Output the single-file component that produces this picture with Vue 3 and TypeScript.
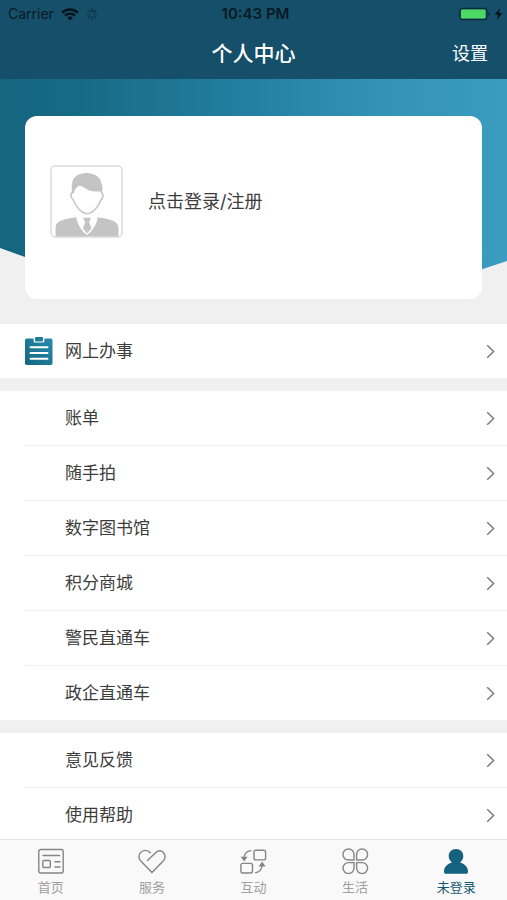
<script setup lang="ts">
import { ref } from 'vue'

interface MenuItem {
  label: string
  icon?: 'clipboard'
}

interface Tab {
  id: string
  label: string
}

const groups: MenuItem[][] = [
  [{ label: '网上办事', icon: 'clipboard' }],
  [
    { label: '账单' },
    { label: '随手拍' },
    { label: '数字图书馆' },
    { label: '积分商城' },
    { label: '警民直通车' },
    { label: '政企直通车' },
  ],
  [{ label: '意见反馈' }, { label: '使用帮助' }],
]

const tabs: Tab[] = [
  { id: 'home', label: '首页' },
  { id: 'service', label: '服务' },
  { id: 'interact', label: '互动' },
  { id: 'life', label: '生活' },
  { id: 'me', label: '未登录' },
]

const activeTab = ref('me')

const spokes = [0, 45, 90, 135, 180, 225, 270, 315]
</script>

<template>
  <div class="app">
    <header class="top">
      <div class="status">
        <div class="status-left">
          <span>Carrier</span>
          <svg class="wifi" viewBox="0 0 18 13" aria-hidden="true">
            <path d="M1.2 4.6a11.2 11.2 0 0 1 15.6 0" />
            <path d="M4 7.6a7.2 7.2 0 0 1 10 0" />
            <path class="dot" d="M9 12.6 6.2 9.8a4 4 0 0 1 5.6 0z" />
          </svg>
          <svg class="spinner" viewBox="0 0 12 12" aria-hidden="true">
            <line
              v-for="(angle, i) in spokes"
              :key="angle"
              x1="6"
              y1="0.8"
              x2="6"
              y2="3.4"
              :transform="`rotate(${angle} 6 6)`"
              :opacity="0.75 - i * 0.06"
            />
          </svg>
        </div>
        <span class="clock">10:43 PM</span>
        <div class="status-right">
          <svg class="battery" viewBox="0 0 44 14" aria-hidden="true">
            <rect class="case" x="0.8" y="1.3" width="27" height="11.4" rx="2.6" />
            <rect class="charge" x="2" y="2.5" width="24.6" height="9" rx="1" />
            <path class="cap" d="M29.4 5.4q1.4.4 1.4 1.6t-1.4 1.6z" />
            <path class="bolt" d="M41 1 35.800 7.800h3.200l-1 5.200 5.200-7h-3.400z" />
          </svg>
        </div>
      </div>
      <div class="nav">
        <h1>个人中心</h1>
        <button type="button" class="settings">设置</button>
      </div>
    </header>

    <main class="content">
      <section class="hero">
        <button type="button" class="card">
          <svg class="avatar" viewBox="0 0 72 72" aria-hidden="true">
            <rect class="frame" x="1" y="1" width="70" height="70" rx="4" />
            <path
              class="fill"
              d="M5.500 70.500V62c0-6 5-8.500 20.500-10.500C26.500 58 31 65 36.500 69 42 65 46.500 58 47 51.500 62 53.500 67.500 56 67.500 62v8.500z"
            />
            <path class="fill" d="M32.500 52h8l-2 4.500 2.500 6-4.500 5-4-5 2.200-6z" />
            <path
              class="face"
              d="M22.200 27c-2.700 1.300-1.600 5.500.8 7.500C25.500 41 31 48 36.500 48S48 41 50.200 34.500c2.400-2 3-6.200.6-7.500V20H22.200z"
            />
            <path
              class="fill"
              d="M21.800 28V18.500C22 11.500 29 8 36 8c9 0 15 5 15 12.500V28l-1.500-2c-6 .8-14-.8-19.500-6.500-3 2-6 4-6.500 8.500z"
            />
          </svg>
          <span>点击登录/注册</span>
        </button>
      </section>

      <nav class="menu" aria-label="个人中心">
        <ul v-for="(group, g) in groups" :key="g" class="group">
          <li v-for="item in group" :key="item.label">
            <a href="#" class="row" @click.prevent>
              <span class="row-icon">
                <svg v-if="item.icon" viewBox="0 0 28 28" aria-hidden="true">
                  <defs>
                    <linearGradient id="clip-fill" x1="0" y1="1" x2="1" y2="0">
                      <stop offset="0" stop-color="#146780" />
                      <stop offset="1" stop-color="#248bad" />
                    </linearGradient>
                  </defs>
                  <rect x="0" y="1.500" width="27.500" height="26.500" rx="1.800" fill="url(#clip-fill)" />
                  <rect x="8.600" y="-1" width="10.800" height="6.600" rx="1.500" fill="#ffffff" />
                  <rect x="10" y="0" width="8" height="4.400" rx="1" fill="#1d7d9b" />
                  <path d="M5.500 10.300h17M5.500 16h17M5.500 21.700h17" stroke="#ffffff" stroke-width="2" stroke-linecap="round" />
                </svg>
              </span>
              <span class="row-label">
                {{ item.label }}
                <svg class="chevron" viewBox="0 0 9 15" aria-hidden="true">
                  <path d="M1.200 1.200 7.600 7.500l-6.400 6.300" />
                </svg>
              </span>
            </a>
          </li>
        </ul>
      </nav>
    </main>

    <nav class="tabs" aria-label="主导航">
      <button
        v-for="tab in tabs"
        :key="tab.id"
        type="button"
        class="tab"
        :class="{ active: tab.id === activeTab }"
        @click="activeTab = tab.id"
      >
        <svg viewBox="0 0 28 28" aria-hidden="true">
          <template v-if="tab.id === 'home'">
            <rect x="1.800" y="2.500" width="24.400" height="23.500" rx="2" />
            <path d="M6 8.500h16.500M18 14.800h5M18 20h5" />
            <rect x="5.800" y="13.500" width="7.500" height="7" rx="1" />
          </template>
          <template v-else-if="tab.id === 'service'">
            <path
              d="M9.500 13.500 17 6.200C20 2.800 24 3.200 26 6.300c1.500 2.600 1.100 5.600-.8 7.700L14 25.500 2.800 14C.8 11.700.6 8.200 2.500 5.700 5 2.500 9.500 2.600 12.200 5.800"
            />
          </template>
          <template v-else-if="tab.id === 'interact'">
            <rect x="15" y="3.300" width="11.600" height="9.600" rx="2" />
            <rect x="1.900" y="16.400" width="11.600" height="9.600" rx="2" />
            <path d="M11.800 3.600C7.300 4 5.300 6.500 5.100 11.500M16.800 25.800c4-.8 6-3.200 6.300-8" />
            <path class="arrow" d="M1.600 9.800h7L5.200 14.600zM19.600 19.400h7l-3.400-4.800z" />
          </template>
          <template v-else-if="tab.id === 'life'">
            <path
              d="M13 13H7.500A5.500 5.500 0 1 1 13 7.500zM15.600 13h5.500a5.500 5.500 0 1 0-5.500-5.500zM13 15.600H7.500A5.500 5.500 0 1 0 13 21.100zM15.600 15.600h5.500a5.500 5.500 0 1 1-5.500 5.500z"
            />
          </template>
          <path
            v-else
            class="person"
            d="M14 2c4.300 0 7.300 3.100 7.300 7 0 2.900-1.300 5.200-3.300 6.500 4.500 1.200 8 4.500 8 9 0 1.500-.7 2.300-2 2.300H4c-1.300 0-2-.8-2-2.300 0-4.500 3.500-7.800 8-9C8 14.200 6.700 11.900 6.700 9c0-3.900 3-7 7.300-7z"
          />
        </svg>
        <span>{{ tab.label }}</span>
      </button>
    </nav>
  </div>
</template>

<style>
body {
  margin: 0;
  background: #f0f0f0;
}
</style>

<style scoped>
.app {
  display: flex;
  flex-direction: column;
  height: 100vh;
  overflow: hidden;
  background: #f0f0f0;
  color: #3c3c3c;
  font-family: Inter, 'Noto Sans CJK SC', sans-serif;
}

button {
  margin: 0;
  padding: 0;
  border: 0;
  background: none;
  color: inherit;
  font: inherit;
  cursor: pointer;
}

.top {
  flex: none;
  background: #154f69;
}

.status {
  display: grid;
  grid-template-columns: 1fr auto 1fr;
  align-items: center;
  height: 28px;
  padding: 0 4px 0 8px;
  color: #071a25;
  font-size: 14px;
  line-height: 20px;
}

.status-left {
  display: flex;
  align-items: center;
  gap: 7px;
}

.clock {
  font-size: 15px;
  font-weight: 600;
}

.status-right {
  display: flex;
  justify-content: flex-end;
}

.wifi {
  width: 18px;
  height: 13px;
  fill: none;
  stroke: #04121a;
  stroke-width: 2.400;
}

.wifi .dot {
  fill: #04121a;
  stroke: none;
}

.spinner {
  width: 12px;
  height: 12px;
  stroke: #071a25;
  stroke-width: 1.200;
  stroke-linecap: round;
}

.battery {
  width: 44px;
  height: 14px;
}

.case {
  fill: none;
  stroke: #0a2a3a;
  stroke-width: 1.200;
}

.charge {
  fill: #4cd964;
}

.cap {
  fill: #0a2a3a;
}

.bolt {
  fill: #04121a;
}

.nav {
  display: grid;
  grid-template-columns: 1fr auto 1fr;
  align-items: center;
  height: 51px;
  padding: 0 19px;
  color: #ffffff;
}

.nav h1 {
  grid-column: 2;
  margin: 0;
  font-size: 21px;
  font-weight: 500;
  line-height: 48px;
}

.settings {
  justify-self: end;
  font-size: 18px;
  line-height: 48px;
}

.content {
  flex: 1;
  min-height: 0;
  overflow-y: auto;
  scrollbar-width: none;
}

.hero {
  position: relative;
  padding: 37px 25px 25px;
}

.hero::before {
  content: '';
  position: absolute;
  inset: 0;
  background: linear-gradient(90deg, #14667f 0%, #176a85 15%, #2480a2 50%, #3293b7 75%, #3a9cbe 100%);
  clip-path: polygon(0 0, 100% 0, 100% 182px, calc(100% - 100px) 215px, 100px 205px, 0 169px);
}

.card {
  position: relative;
  display: flex;
  align-items: center;
  gap: 25px;
  width: 100%;
  height: 183px;
  padding: 0 25px 12px;
  border-radius: 12px;
  background: #ffffff;
  font-size: 18px;
  line-height: 28px;
}

.avatar {
  width: 73px;
  height: 73px;
}

.frame {
  fill: #ffffff;
  stroke: #dcdcdc;
  stroke-width: 1.500;
}

.fill {
  fill: #c4c4c4;
}

.face {
  fill: #ffffff;
  stroke: #c4c4c4;
  stroke-width: 1.500;
}

.menu {
  display: flex;
  flex-direction: column;
  gap: 13px;
}

.group {
  margin: 0;
  padding: 0;
  background: #ffffff;
  list-style: none;
}

.row {
  display: flex;
  height: 54px;
  padding-left: 25px;
  color: inherit;
  font-size: 17px;
  line-height: 54px;
  text-decoration: none;
}

.group li + li {
  margin-left: 25px;
  border-top: 1px solid #f1f1f1;
}

.group li + li .row {
  padding-left: 0;
}

.row-icon {
  display: flex;
  align-items: center;
  width: 40px;
}

.row-icon svg {
  width: 28px;
  height: 28px;
}

.row-label {
  display: flex;
  flex: 1;
  align-items: center;
  justify-content: space-between;
  padding-right: 12px;
}

.chevron {
  width: 9px;
  height: 15px;
  fill: none;
  stroke: #7c7c7c;
  stroke-width: 1.500;
}

.tabs {
  display: grid;
  flex: none;
  grid-template-columns: repeat(5, 1fr);
  height: 60px;
  border-top: 1px solid #e4e4e4;
  background: #f9f9f9;
}

.tab {
  display: flex;
  flex-direction: column;
  align-items: center;
  gap: 2px;
  padding-top: 7px;
  color: #a0a0a0;
  font-size: 13px;
  line-height: 20px;
}

.tab svg {
  width: 28px;
  height: 28px;
  fill: none;
  stroke: #858585;
  stroke-width: 1.400;
  stroke-linejoin: round;
  stroke-linecap: round;
}

.tab .arrow {
  fill: #858585;
  stroke: none;
}

.tab .person {
  fill: #14627e;
  stroke: none;
}

.tab.active {
  color: #14566f;
}
</style>
